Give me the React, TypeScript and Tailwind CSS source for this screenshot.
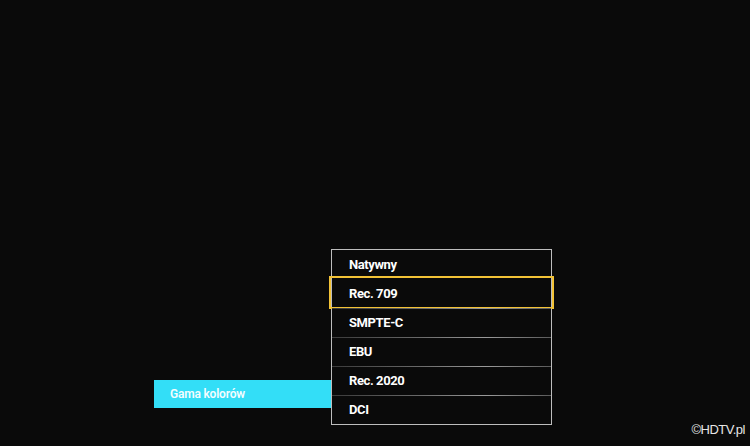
import React from "react";

const items = ["Natywny", "Rec. 709", "SMPTE-C", "EBU", "Rec. 2020", "DCI"];

export default function App() {
  return (
    <div className="relative w-[750px] h-[446px] bg-[#0a0a0a] overflow-hidden" style={{ fontFamily: 'Roboto, "Open Sans", sans-serif' }}>
      <div className="flex items-end pl-[154px] pt-[249px]">
        <div className="w-[177px] h-[28px] mb-[17px] bg-[#33def7] flex items-center pl-[16px] text-[#f4fdff] text-[12px] font-semibold tracking-[-0.2px]">
          Gama kolorów
        </div>
        <div className="w-[221px] border border-[#bdbdbd] flex flex-col">
          {items.map((t, i) => (
            <div key={t} className="relative h-[29px] flex items-center pl-[17px] text-white text-[13px] font-bold tracking-[-0.4px]">
              {i >= 2 && (
                <div className="absolute left-0 right-0 top-0 h-px bg-[linear-gradient(90deg,#3a3a3a_0%,#6a6a6a_40%,#9a9a9a_70%,#5a5a5a_100%)]" />
              )}
              {i === 1 && (
                <div className="absolute -left-[3px] -right-[3px] -top-[3px] -bottom-[1px] border-2 border-[#f2c236]" />
              )}
              <span className="relative">{t}</span>
            </div>
          ))}
        </div>
      </div>
      <div className="absolute right-[5px] bottom-[7px] text-[13px] tracking-[-0.5px] text-[#e6e6e6]" style={{ fontFamily: '"Liberation Sans", Arial, sans-serif' }}>
        ©HDTV.pl
      </div>
    </div>
  );
}
